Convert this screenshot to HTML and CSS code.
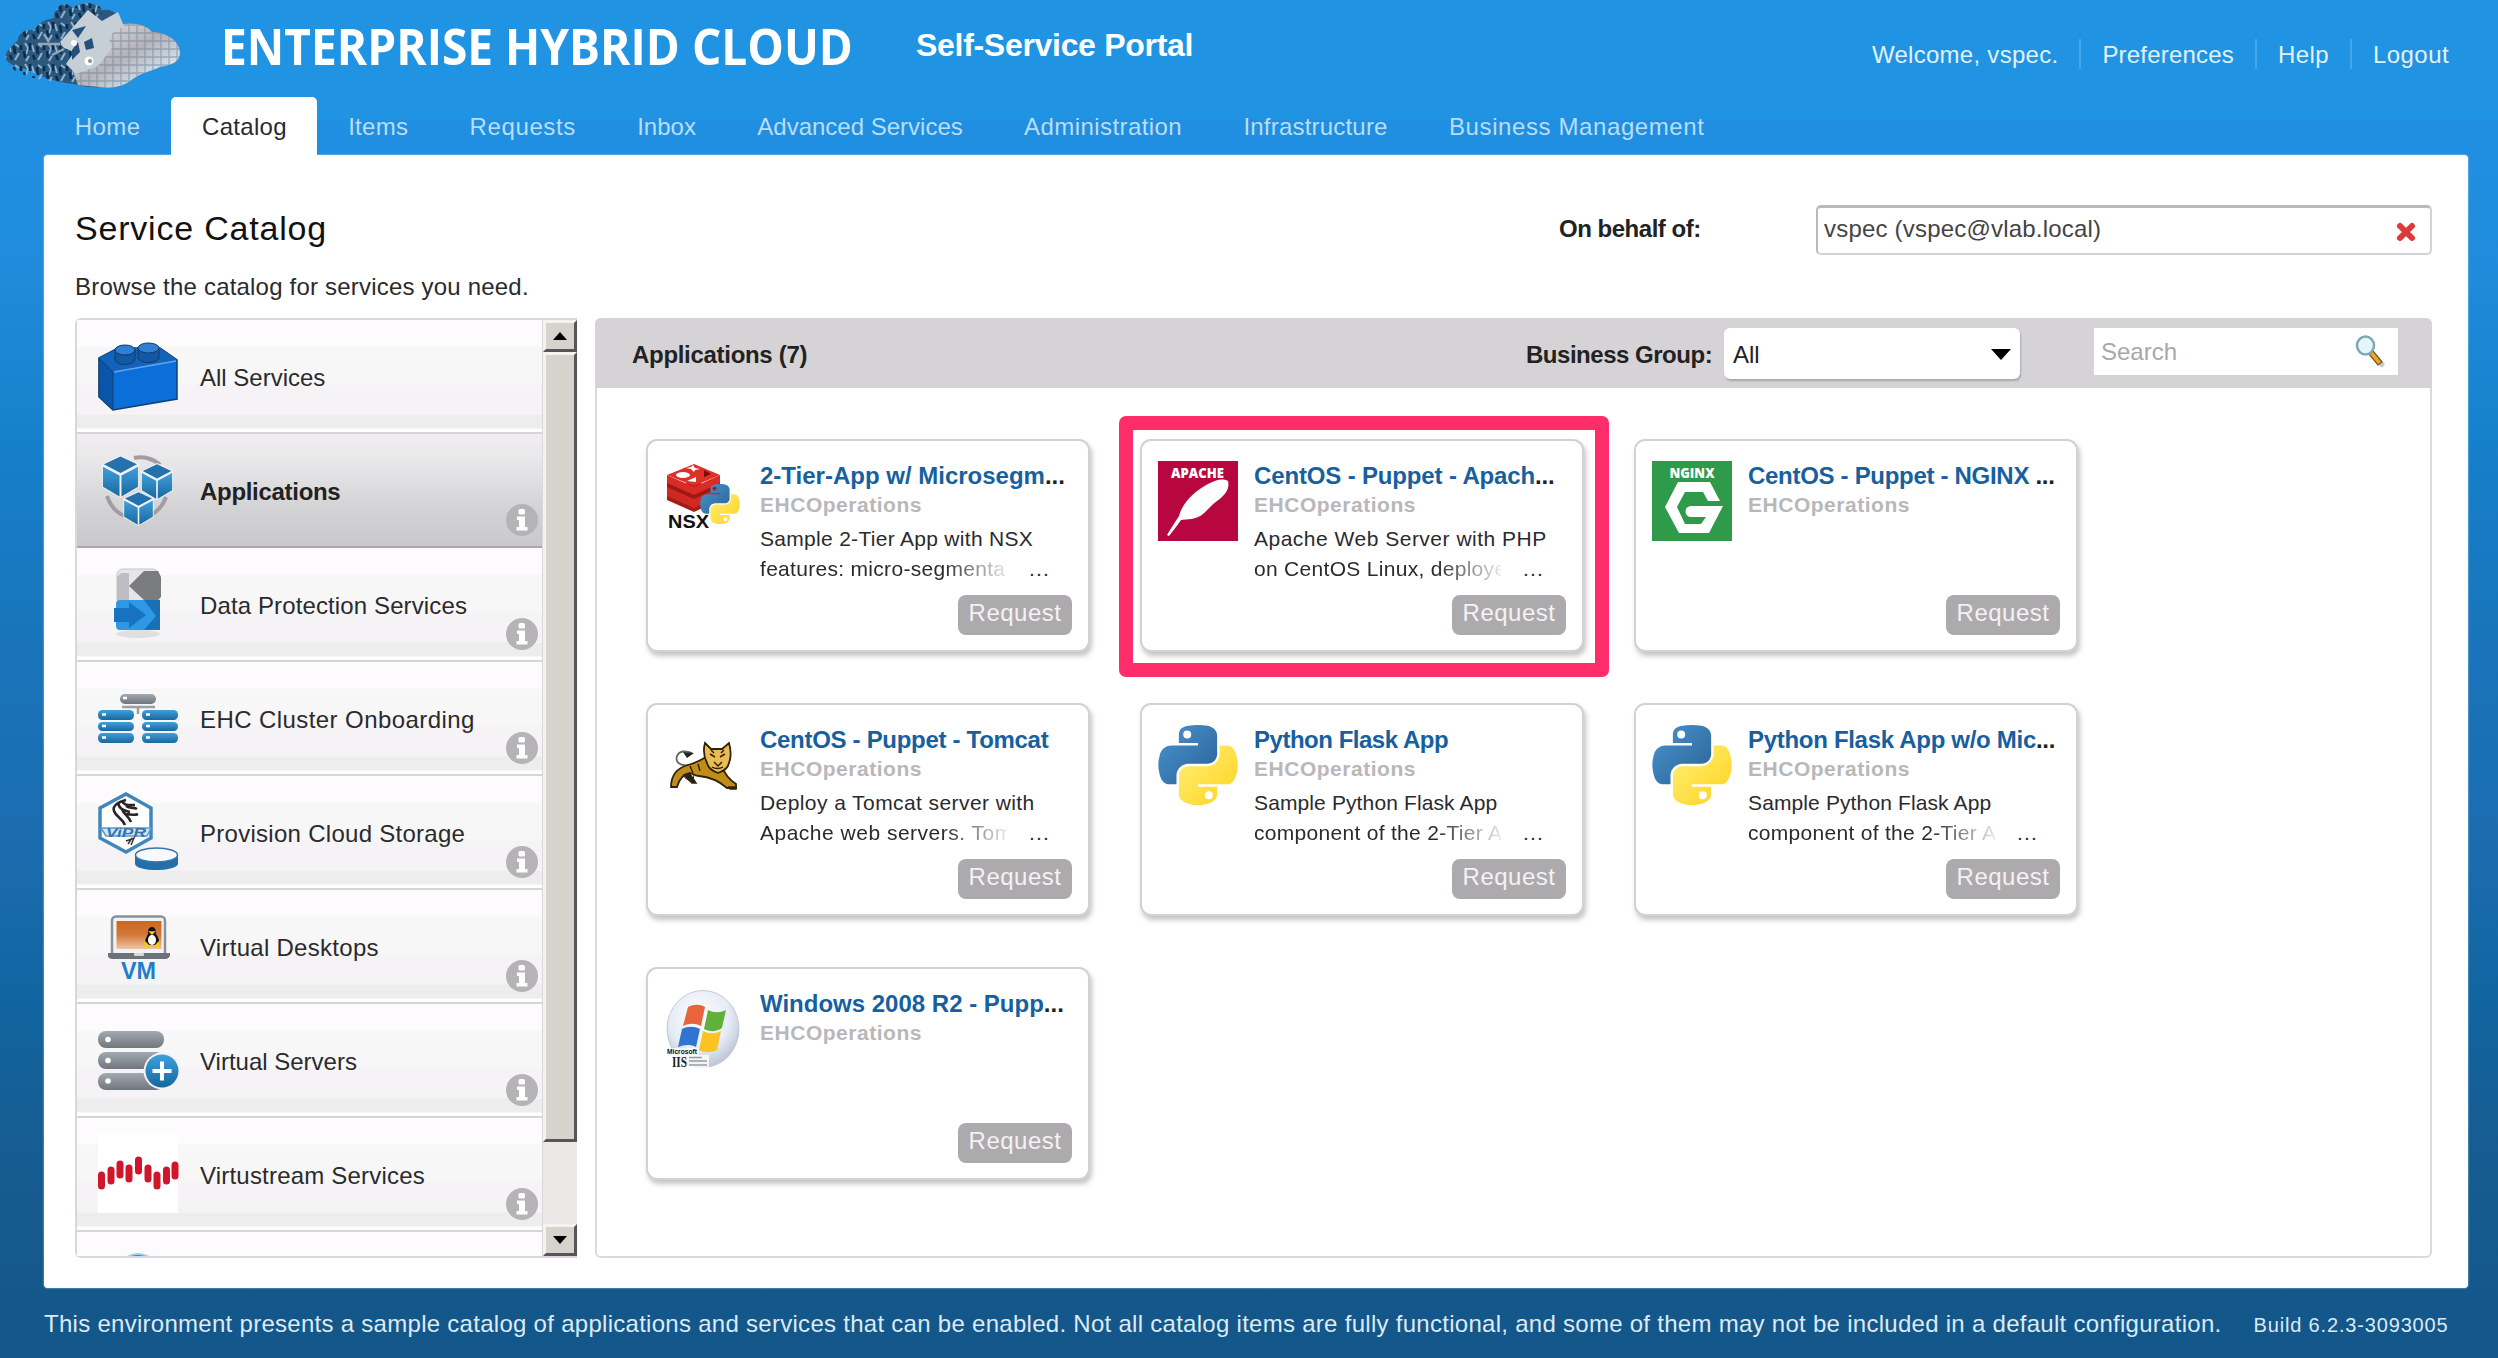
FILE: index.html
```html
<!DOCTYPE html>
<html lang="en">
<head>
<meta charset="utf-8">
<title>Service Catalog</title>
<link rel="stylesheet" href="styles.css">
</head>
<body>
<svg class="defs" width="0" height="0" aria-hidden="true">
  <defs>
    <linearGradient id="pyBlue" x1="0" y1="0" x2="1" y2="1"><stop offset="0" stop-color="#4a94cf"/><stop offset="1" stop-color="#2a6296"/></linearGradient>
    <linearGradient id="pyYellow" x1="0" y1="0" x2="1" y2="1"><stop offset="0" stop-color="#fff07a"/><stop offset="1" stop-color="#ffd21c"/></linearGradient>
    <linearGradient id="blueV" x1="0" y1="0" x2="0" y2="1"><stop offset="0" stop-color="#3f9fdc"/><stop offset="1" stop-color="#17689f"/></linearGradient>
    <linearGradient id="grayV" x1="0" y1="0" x2="0" y2="1"><stop offset="0" stop-color="#a3a9b0"/><stop offset="1" stop-color="#70767d"/></linearGradient>
    <symbol id="python" viewBox="0 0 111 112">
      <path fill="url(#pyBlue)" d="M54.9 0C50.3 0 46 .4 42.1 1.1 30.8 3.1 28.7 7.3 28.7 15v10.300h26.800v3.400H18.600c-7.800 0-14.600 4.700-16.700 13.600-2.500 10.200-2.600 16.500 0 27.200 1.900 8 6.400 13.600 14.200 13.600h9.300V70.800c0-8.800 7.600-16.600 16.700-16.600h26.800c7.400 0 13.400-6.200 13.400-13.700V15c0-7.200-6.100-12.700-13.400-13.900C64.300.3 59.500 0 54.900 0zM40.400 7.700a5.600 5.600 0 1 1 0 11.200 5.600 5.600 0 0 1 0-11.200z"/>
      <path fill="url(#pyYellow)" d="M85.600 28.700v11.900c0 9.200-7.800 17-16.700 17H42.100c-7.300 0-13.400 6.200-13.400 13.600v25.500c0 7.300 6.300 11.600 13.400 13.600 8.500 2.500 16.600 3 26.800 0 6.700-1.900 13.400-5.900 13.400-13.600V86.500H55.500v-3.400h40.200c7.800 0 10.700-5.400 13.400-13.600 2.800-8.400 2.700-16.500 0-27.200-1.900-7.800-5.600-13.600-13.400-13.600zM70.600 92.800a5.600 5.600 0 1 1 0 11.200 5.600 5.600 0 0 1 0-11.200z"/>
    </symbol>
    <symbol id="info" viewBox="0 0 32 32">
      <circle cx="16" cy="16" r="16" fill="#b5b3b6"/>
      <rect x="12.500" y="5" width="6.500" height="5.500" rx="1.500" fill="#fff"/>
      <path fill="#fff" d="M11 12.500h8V23h2.500v3.500h-11V23H13v-7h-2z"/>
    </symbol>
    <symbol id="cube" viewBox="0 0 40 44">
      <path d="M20 0L39 9V33L20 44 1 33V9z" fill="#f0f2f5"/>
      <path d="M20 1.500L37 9.500 20 18.500 3 9.500z" fill="#2472ad"/>
      <path d="M2 12L19 21V42.500L2 32.500z" fill="url(#blueV)"/>
      <path d="M38 12L21 21V42.500L38 32.500z" fill="url(#blueV)"/>
    </symbol>
  </defs>
</svg>

<header class="header">
  <div class="brand">
    <svg class="brand-logo" viewBox="0 0 190 97">
      <defs>
        <pattern id="grid" width="8" height="8" patternUnits="userSpaceOnUse"><path d="M0 1H8M1 0V8" stroke="#6f8296" stroke-width="1.300" opacity=".55"/></pattern>
        <pattern id="speck" width="23" height="21" patternUnits="userSpaceOnUse"><path d="M2 1l3 5-2 6M9 3l2 7M19 11l-4 7M6 14l-3 5M15 2l4 3" stroke="#8fb4d2" stroke-width="1.900" fill="none"/><path d="M7 1v7M14 4l1 8M1 9l1 7M10 13l2 5M21 3v5" stroke="#0c2c4a" stroke-width="2.600"/></pattern>
        <linearGradient id="cloudR" x1="0" y1="0" x2="1" y2="1"><stop offset="0" stop-color="#e2e6ec"/><stop offset=".5" stop-color="#b5b3b8"/><stop offset=".8" stop-color="#d3e4f2"/></linearGradient>
      </defs>
      <path d="M5 58C6 50 13 45 18 40c0-8 10-11 17-10 3-8 12-11 19-12C54 5 66 0 73 8c9-7 24-6 30 2 10-2 17 6 20 14 11-2 25 1 29 8 13 0 28 8 28 21 0 9-8 12-20 14-8 4-19 6-27 12-10 8-22 10-33 8-12 1-19-2-27-3-14-2-30-5-39-13-9-3-22-2-29-13z" fill="#2c587d"/>
      <path d="M5 58C6 50 13 45 18 40c0-8 10-11 17-10 3-8 12-11 19-12C54 5 66 0 73 8c9-7 24-6 30 2L75 83C51 82 10 78 5 58z" fill="url(#speck)"/>
      <path d="M106 24h17c11-2 25 1 29 8 13 0 28 8 28 21 0 9-8 12-20 14-8 4-19 6-27 12-10 8-22 10-33 8l-22-2-6-16 20-14z" fill="url(#cloudR)"/>
      <path d="M106 24h17c11-2 25 1 29 8 13 0 28 8 28 21 0 9-8 12-20 14-8 4-19 6-27 12-10 8-22 10-33 8l-22-2-6-16 20-14z" fill="url(#grid)"/>
      <path d="M60 42l28-32 14 11 16-9 6 14-16 10 4 12-14 18-22 8-10-10 8-12-10-4z" fill="#c6ced6"/>
      <path d="M72 30l14-4-8 12zM84 42l8-4 2 10-8 2zM72 50l6-8 2 10-8 8z" fill="#24507a"/>
      <circle cx="74" cy="43" r="3" fill="#fff"/><circle cx="89" cy="61" r="4.500" fill="#fff"/><circle cx="90" cy="61" r="2" fill="#8a8f95"/>
      <path d="M38 44h22M44 34l5 8M52 55l12-6" stroke="#9ba5ae" stroke-width="2.500"/>
    </svg>
    <h1 class="brand-name"><span>ENTERPRISE HYBRID CLOUD</span></h1>
    <span class="brand-sub ls-n3">Self-Service Portal</span>
    <div class="user-links">
      <span class="ls-3">Welcome, vspec.</span><i></i><a class="ls-2">Preferences</a><i></i><a class="ls-4">Help</a><i></i><a class="ls-4">Logout</a>
    </div>
  </div>
  <nav class="nav">
    <a class="ls-5">Home</a>
    <a class="active ls-3">Catalog</a>
    <a class="ls-3">Items</a>
    <a class="ls-6">Requests</a>
    <a>Inbox</a>
    <a>Advanced Services</a>
    <a class="ls-4">Administration</a>
    <a class="ls-2">Infrastructure</a>
    <a class="ls-6">Business Management</a>
  </nav>
</header>

<main class="page">
  <div class="page-head">
    <div>
      <h2 class="page-title">Service Catalog</h2>
      <p class="page-desc ls-2">Browse the catalog for services you need.</p>
    </div>
    <div class="behalf">
      <b class="ls-n5">On behalf of:</b>
      <div class="behalf-field"><span class="ls-2">vspec (vspec@vlab.local)</span>
        <svg class="clear" viewBox="0 0 20 18"><path d="M4 3L16 15M16 3L4 15" stroke="#dd3b3b" stroke-width="6" stroke-linecap="round"/></svg>
      </div>
    </div>
  </div>

  <div class="columns">
    <aside class="sidebar">
      <ul class="cats">
        <li>
          <svg class="cat-icon" viewBox="0 -2 80 80">
            <path d="M1 21L20 11H62L79 23V62L15 73 1 60z" fill="#0a6fd8" stroke="#14406e" stroke-width="1.500"/>
            <path d="M1 21L20 11H62L79 23 15 35z" fill="#1264ba"/>
            <path d="M1 21L15 35V73L1 60z" fill="#0a55a8" stroke="#14406e"/>
            <path d="M16 35L78 24" stroke="#5fa8ee" stroke-width="1.500"/>
            <path d="M17 13v10c2 6 18 6 20 0V13z" fill="#1258a4" stroke="#123a66"/><ellipse cx="27" cy="13" rx="10" ry="5" fill="#2f80d4" stroke="#123a66"/>
            <path d="M40 11v10c2 6 19 6 21 0V11z" fill="#1258a4" stroke="#123a66"/><ellipse cx="50.500" cy="11" rx="10.500" ry="5" fill="#2f80d4" stroke="#123a66"/>
          </svg>
          <span>All Services</span>
        </li>
        <li class="selected">
          <svg class="cat-icon" viewBox="0 0 80 80">
            <path d="M36 9c10-2 20 1 26 7M9 47c4 12 12 19 20 20M68 48c-3 9-8 14-15 18" fill="none" stroke="#a19da1" stroke-width="4"/>
            <use href="#cube" x="3" y="6" width="39" height="43"/><use href="#cube" x="42" y="14" width="34" height="37"/><use href="#cube" x="24" y="42" width="33" height="35"/>
          </svg>
          <span class="ls-n3">Applications</span><svg class="info"><use href="#info"/></svg>
        </li>
        <li>
          <svg class="cat-icon" viewBox="0 -2 80 80">
            <ellipse cx="40" cy="69" rx="22" ry="4" fill="#dfdfe2"/>
            <rect x="19" y="4" width="42" height="36" rx="6" fill="#e6e6e8" stroke="#c5c5c8"/>
            <path d="M19 12v24h12V8H23z" fill="#bebec2"/>
            <path d="M31 21L46 6h14l3 6v20l-4 4H47z" fill="#7b7c80"/>
            <rect x="18" y="35" width="44" height="30" rx="4" fill="#2e98e4"/>
            <path d="M46 35h16v30H46l12-14z" fill="#1b70b5"/>
            <path d="M16 43h15v-6L48 50 31 63v-6H16z" fill="#1673c0"/>
          </svg>
          <span class="ls-1">Data Protection Services</span><svg class="info"><use href="#info"/></svg>
        </li>
        <li>
          <svg class="cat-icon" viewBox="0 -3 80 80">
            <path d="M24 27H57M40 27v7" stroke="#9ba0a6" stroke-width="2.500"/>
            <rect x="22" y="14" width="36" height="10" rx="5" fill="url(#grayV)"/>
            <g fill="url(#blueV)"><rect y="30" width="36" height="10" rx="4.500"/><rect y="42" width="36" height="9" rx="4.500"/><rect y="53" width="36" height="10" rx="4.500"/><rect x="44" y="30" width="36" height="10" rx="4.500"/><rect x="44" y="42" width="36" height="9" rx="4.500"/><rect x="44" y="53" width="36" height="10" rx="4.500"/></g>
            <path d="M25 18h4M4 34.500h4M4 46h4M4 57.500h4M48 34.500h4M48 46h4M48 57.500h4" stroke="#fff" stroke-width="2.500"/>
          </svg>
          <span class="ls-4">EHC Cluster Onboarding</span><svg class="info"><use href="#info"/></svg>
        </li>
        <li>
          <svg class="cat-icon" viewBox="0 0 80 80">
            <path d="M28 3L53 17V47L28 61 2 47V17z" fill="#fff" stroke="#3f86bd" stroke-width="3.500"/>
            <path d="M28 9c-8 2-14 6-12 11 2 6 8 7 11 14M20 11c1 8 6 8 12 10M24 10c2 5 8 4 13 4M28 15c4 3 8 1 11 3M24 18c2 6 6 6 9 13M27 23c6 0 9 2 13 0" fill="none" stroke="#2a2626" stroke-width="2.600"/>
            <path d="M3 37h50l-4 8H8z" fill="#cfe4f4" stroke="#5a9bcb" stroke-width="1.500"/>
            <text x="8" y="46" font-size="12" font-style="italic" font-weight="700" textLength="40" lengthAdjust="spacingAndGlyphs" fill="#3474ab" class="glyph">ViPR</text>
            <path d="M34 47l-4 6M28 50l8-3-3 7" stroke="#333" stroke-width="1.500" fill="none"/>
            <path d="M37 64v9c2 8 40 8 43 0v-9z" fill="#246ea9"/>
            <ellipse cx="58.500" cy="64" rx="21" ry="7" fill="#f6fafd" stroke="#3576a8" stroke-width="1.500"/>
          </svg>
          <span class="ls-3">Provision Cloud Storage</span><svg class="info"><use href="#info"/></svg>
        </li>
        <li>
          <svg class="cat-icon" viewBox="0 0 80 80">
            <defs><linearGradient id="screen" x1="0" y1="0" x2="0" y2="1"><stop offset="0" stop-color="#cd671f"/><stop offset=".5" stop-color="#d3783a"/><stop offset="1" stop-color="#edc5a5"/></linearGradient></defs>
            <rect x="14" y="11.500" width="53" height="40" rx="4" fill="#f1f2f4" stroke="#8b9198" stroke-width="2.500"/>
            <rect x="18.500" y="16" width="45" height="28" fill="url(#screen)"/>
            <path d="M10 48H72v3c-2 3-4 3-6 3H16c-3 0-5 0-6-3z" fill="#6d7279"/><rect x="36" y="48" width="10" height="3" rx="1" fill="#d5d8db"/>
            <path d="M54 22c4 0 4 5 4 7 3 4 4 8 3 11H47c-1-3 1-7 3-11 0-3 0-7 4-7z" fill="#111"/><ellipse cx="54" cy="35" rx="4" ry="5" fill="#fff"/><path d="M47 37l4 4h-4zM61 37l-4 4h4zM52 27h4l-2 2z" fill="#f5cb16" stroke="#f5cb16" stroke-width="1.500"/>
            <text x="23" y="73.500" font-size="24" font-weight="700" textLength="35" lengthAdjust="spacingAndGlyphs" fill="#1e7ec8" class="glyph">VM</text>
          </svg>
          <span class="ls-3">Virtual Desktops</span><svg class="info"><use href="#info"/></svg>
        </li>
        <li>
          <svg class="cat-icon" viewBox="0 0 80 80">
            <g fill="url(#grayV)"><rect y="12" width="66" height="17" rx="8"/><rect y="33" width="66" height="17" rx="8"/><rect y="54" width="66" height="17" rx="8"/></g>
            <g fill="#fff"><circle cx="10" cy="20.500" r="2.800"/><circle cx="10" cy="41.500" r="2.800"/><circle cx="10" cy="62" r="2.800"/></g>
            <circle cx="64" cy="52" r="18.500" fill="#f4f2f5"/><circle cx="64" cy="52" r="16.500" fill="url(#blueV)"/>
            <path d="M64 42.500v19M54.500 52h19" stroke="#fff" stroke-width="4"/>
          </svg>
          <span>Virtual Servers</span><svg class="info"><use href="#info"/></svg>
        </li>
        <li>
          <svg class="cat-icon" viewBox="0 0 80 80">
            <rect width="80" height="80" fill="#fff"/>
            <path d="M3.500 42V53M13 37V48M22 31V42M31 35V46M40.500 27V38M50 35V46M59 42V53M68.500 37V48M77 32V43" stroke="#d2162a" stroke-width="7" stroke-linecap="round"/>
          </svg>
          <span class="ls-2">Virtustream Services</span><svg class="info"><use href="#info"/></svg>
        </li>
        <li class="peek">
          <svg class="cat-icon" viewBox="0 0 80 80"><circle cx="40" cy="28" r="21" fill="#2d87c8" stroke="#9fd2f2" stroke-width="2"/></svg>
        </li>
      </ul>
      <div class="scrollbar">
        <div class="sb-btn"><svg viewBox="0 0 14 8"><path d="M0 8L7 0l7 8z"/></svg></div>
        <div class="sb-thumb"></div>
        <div class="sb-track"></div>
        <div class="sb-btn"><svg viewBox="0 0 14 8"><path d="M0 0L7 8l7-8z"/></svg></div>
      </div>
    </aside>

    <section class="catalog">
      <div class="toolbar">
        <b class="toolbar-title ls-n3">Applications (7)</b>
        <b class="bg-label ls-n5">Business Group:</b>
        <div class="select"><span>All</span><svg viewBox="0 0 20 11"><path d="M0 0H20L10 11z"/></svg></div>
        <div class="search"><span>Search</span>
          <svg viewBox="0 0 34 34">
            <path d="M20 17l10 11-3 4-10-11z" fill="#c9c7c9" transform="translate(2 2)"/>
            <path d="M20 17l9 11-4 3-9-11z" fill="#e8a72c" stroke="#7c541a" stroke-width="1.200"/>
            <ellipse cx="12.500" cy="11.500" rx="8.500" ry="9" fill="#e6f5f8" stroke="#7fa9b3" stroke-width="2.500"/>
          </svg>
        </div>
      </div>
      <div class="grid">
        <article class="card">
          <svg class="card-icon" viewBox="-2 0 80 80">
            <g transform="translate(1 1)"><path d="M0 30L27 18 53 30V38L27 50 0 38z" fill="#a51d17"/><path d="M0 24L27 36 53 24V34L27 46 0 34z" fill="#cf2a22"/><path d="M0 18L27 30 53 18V25L27 37 0 25z" fill="#9c1a15"/><path d="M0 13L27 25 53 13V21L27 33 0 21z" fill="#d92c24"/><path d="M27 2L53 13 27 24 0 13z" fill="#dd3128"/></g>
            <ellipse cx="17" cy="14" rx="7" ry="3" fill="#fff"/><path d="M20 7l5-1 2-2 2 3 5 1-5 1-1 2-3-3zM21 20l9-4v5z" fill="#fff"/><path d="M38 9l7 4-7 3z" fill="#7a0d0a"/>
            <use href="#python" x="34" y="23" width="40" height="40"/>
            <text x="2" y="66.500" font-size="19" font-weight="700" textLength="41" lengthAdjust="spacingAndGlyphs" class="glyph" fill="#111">NSX</text>
          </svg>
          <div class="card-body"><h3>2-Tier-App w/ Microsegm<em>...</em></h3><p class="org">EHCOperations</p>
          <p class="desc"><span>Sample 2-Tier App with NSX</span><span class="fade"><span>features: micro-segmenta</span></span></p></div>
          <button>Request</button>
        </article>
        <article class="card highlighted">
          <svg class="card-icon" viewBox="0 0 80 80"><rect width="80" height="80" fill="#b80640"/>
            <text x="13" y="17" font-size="14.500" font-weight="800" textLength="53" lengthAdjust="spacingAndGlyphs" class="sans" fill="#fff">APACHE</text>
            <path d="M70 20c2 8-3 14-11 20-7 5-9 9-14 13-7 6-16 5-22 6C19 65 14 71 11 75l-2-1C13 67 18 60 21 55 24 42 38 29 50 23 58 19 64 17 70 20z" fill="#fff"/></svg>
          <div class="card-body"><h3 class="ls-n2">CentOS - Puppet - Apach<em>...</em></h3><p class="org">EHCOperations</p>
          <p class="desc"><span class="ls-5">Apache Web Server with PHP</span><span class="fade"><span class="ls-0">on CentOS Linux, deployed</span></span></p></div>
          <button>Request</button>
        </article>
        <article class="card">
          <svg class="card-icon" viewBox="0 0 80 80"><rect width="80" height="80" fill="#2e9a4a"/>
            <text x="17.500" y="16.500" font-size="14" font-weight="800" textLength="45" lengthAdjust="spacingAndGlyphs" class="sans" fill="#fff">NGINX</text>
            <path d="M26 21H58L68 40H56L51 31H33L25 46 33 63H49L54 56H39a5 5 0 0 1 0-11H71L57 72H27L13 46z" fill="#fff"/></svg>
          <div class="card-body"><h3 class="ls-n3">CentOS - Puppet - NGINX <em>...</em></h3><p class="org">EHCOperations</p></div>
          <button>Request</button>
        </article>
        <article class="card">
          <svg class="card-icon" viewBox="0 0 80 80">
            <path d="M27 40C16 42 11 37 13 31c2-5 8-6 15-3" fill="none" stroke="#666" stroke-width="1.800"/><path d="M19 27l11 1-7 5z" fill="#222"/>
            <path d="M20 46l10 2-1 10-8-5z" fill="#fff" stroke="#333"/>
            <path d="M7 62C7 51 13 43 24 40c8-2 13-5 18-8l17 11c2 7 7 12 13 16v4h-9C55 56 46 52 35 51c-3 0-6-2-9-3-7 1-11 7-13 14z" fill="#c08d18" stroke="#30220a" stroke-width="1.800"/>
            <path d="M41 18l6 6h11l7-6c2 7 2 15 0 20-1 5-5 8-11 10-6-2-10-6-11-10-3-6-4-13-2-20z" fill="#e8bd55" stroke="#30220a" stroke-width="1.800"/>
            <path d="M46 29l5 3M61 29l-5 3M50 37l4 4 4-4M48 42c3 2 8 2 11 0M47 25l3 3M60 25l-3 3" stroke="#30220a" stroke-width="1.500" fill="none"/>
            <path d="M26 41l3 7M34 39l2 7M20 50l8 8h4l-6-9zM65 62h7v2h-6z" stroke="#30220a" stroke-width="1.500" fill="#222"/>
          </svg>
          <div class="card-body"><h3 class="ls-n3">CentOS - Puppet - Tomcat</h3><p class="org">EHCOperations</p>
          <p class="desc"><span class="ls-4">Deploy a Tomcat server with</span><span class="fade"><span class="ls-5">Apache web servers. Tom</span></span></p></div>
          <button>Request</button>
        </article>
        <article class="card">
          <svg class="card-icon"><use href="#python" width="80" height="80"/></svg>
          <div class="card-body"><h3 class="ls-n5">Python Flask App</h3><p class="org">EHCOperations</p>
          <p class="desc"><span class="ls-1">Sample Python Flask App</span><span class="fade"><span>component of the 2-Tier App</span></span></p></div>
          <button>Request</button>
        </article>
        <article class="card">
          <svg class="card-icon"><use href="#python" width="80" height="80"/></svg>
          <div class="card-body"><h3 class="ls-n3">Python Flask App w/o Mic<em>...</em></h3><p class="org">EHCOperations</p>
          <p class="desc"><span class="ls-1">Sample Python Flask App</span><span class="fade"><span>component of the 2-Tier App</span></span></p></div>
          <button>Request</button>
        </article>
        <article class="card">
          <svg class="card-icon" viewBox="0 0 80 80">
            <defs><radialGradient id="orb" cx=".45" cy=".35" r=".7"><stop offset="0" stop-color="#fff"/><stop offset=".6" stop-color="#e6ebf5"/><stop offset="1" stop-color="#b3bdd0"/></radialGradient></defs>
            <ellipse cx="39" cy="40" rx="36" ry="38.500" fill="url(#orb)" stroke="#c3cad8"/>
            <path d="M24 18c6-3 12-3 17 0l-4 19c-6-3-12-3-18 0z" fill="#e8643a"/>
            <path d="M44 21c6 3 12 3 18 0l-4 18c-6 4-12 4-18 1z" fill="#5fb13c"/>
            <path d="M18 40c6-3 12-3 18 0l-4 18c-6-3-12-2-18 0z" fill="#2f74cf"/>
            <path d="M39 42c6 3 12 3 18 0l-4 19c-6 3-12 3-18 0z" fill="#fbc31f"/>
            <path d="M2 59h33v7h10v13H8L2 68z" fill="#fff" opacity=".75"/>
            <text x="3" y="65" font-size="7.500" font-weight="700" textLength="30" lengthAdjust="spacingAndGlyphs" class="glyph" fill="#111">Microsoft</text>
            <text x="8" y="78" font-size="15" font-weight="700" textLength="15" lengthAdjust="spacingAndGlyphs" class="serif" fill="#222">IIS</text>
            <path d="M25 68.500h13M25 72h18M25 76h18" stroke="#9b9ba0" stroke-width="1.500"/>
          </svg>
          <div class="card-body"><h3>Windows 2008 R2 - Pupp<em>...</em></h3><p class="org">EHCOperations</p></div>
          <button>Request</button>
        </article>
      </div>
    </section>
  </div>
</main>

<footer class="footer">
  <span class="note">This environment presents a sample catalog of applications and services that can be enabled. Not all catalog items are fully functional, and some of them may not be included in a default configuration.</span>
  <span class="build">Build 6.2.3-3093005</span>
</footer>
</body>
</html>
```
FILE: styles.css
```css
*, *::before, *::after { box-sizing: border-box; }
body {
  margin: 0;
  width: 2498px;
  height: 1358px;
  overflow: hidden;
  font: 24px/28px "Liberation Sans", Arial, sans-serif;
  color: #2b2a2d;
  background: linear-gradient(180deg, #2094e3 0, #2094e3 118px, #208fe2 120px, #208edf 190px, #1f8bd9 280px, #1580cb 440px, #1974ba 640px, #1b6cae 850px, #1065a0 1000px, #165d94 1120px, #155a8c 1240px, #13568a 1358px);
}
h1, h2, h3, p, ul { margin: 0; padding: 0; font-weight: 400; }
svg { display: block; overflow: visible; }
.defs { position: absolute; }
.glyph { font-family: "Liberation Sans", Arial, sans-serif; }
.sans { font-family: "Open Sans", sans-serif; }
.serif { font-family: "Liberation Serif", serif; }

/* letter tracking, in tenths of a pixel */
.ls-n5 { letter-spacing: -.48px; }
.ls-n3 { letter-spacing: -.3px; }
.ls-n2 { letter-spacing: -.15px; }
.ls-1 { letter-spacing: .12px; }
.ls-2 { letter-spacing: .2px; }
.ls-3 { letter-spacing: .28px; }
.ls-4 { letter-spacing: .42px; }
.ls-5 { letter-spacing: .5px; }
.ls-6 { letter-spacing: .6px; }

/* header */
.header { height: 155px; }
.brand { height: 97px; display: flex; white-space: nowrap; }
.brand-logo { width: 190px; height: 97px; flex: none; }
.brand-name {
  width: 694px;
  padding-left: 31px;
  font: 700 50px/92px "Open Sans", sans-serif;
  color: #fff;
}
.brand-name span { display: inline-block; transform: scaleX(.922); transform-origin: 0 50%; }
.brand-sub { margin-left: 32px; font-weight: 700; font-size: 32px; line-height: 91px; color: #fff; }
.user-links { margin-left: auto; padding: 39px 49px 0 0; height: 69px; display: flex; line-height: 31px; color: #e0f1fc; }
.user-links i { width: 2px; height: 30px; margin: 0 21px; background: #45a6e8; }
.nav { height: 58px; padding-left: 44px; display: flex; line-height: 59px; color: #b8def8; white-space: nowrap; }
.nav a { padding: 0 30.7px; }
.nav .active { background: #fff; color: #2b2a2d; border-radius: 5px 5px 0 0; }

/* page */
.page { margin: 0 30px 0 44px; height: 1133px; padding: 0 36px 0 31px; background: #fff; border-radius: 4px; box-shadow: 0 0 2px #bfe0f5; }
.page-head { height: 163px; display: flex; justify-content: space-between; white-space: nowrap; }
.page-title { margin-top: 54px; font-size: 34px; line-height: 38px; letter-spacing: .8px; color: #111; }
.page-desc { margin-top: 26px; line-height: 28px; }
.behalf { display: flex; padding-top: 50px; }
.behalf b { width: 257px; line-height: 47px; color: #222; }
.behalf-field {
  width: 616px; height: 50px; padding: 0 14px 0 6px;
  display: flex; justify-content: space-between;
  line-height: 41px; color: #444;
  border: 2px solid #d3d1d4; border-top: 3px solid #bbb9bc; border-left-color: #bbb9bc; border-radius: 5px;
}
.clear { width: 20px; height: 18px; margin-top: 15px; }

.columns { display: flex; gap: 18px; height: 940px; }
.sidebar { width: 502px; display: flex; border: 2px solid #d9d7da; border-right: 0; border-radius: 6px 0 0 6px; }
.cats { flex: 1; height: 936px; overflow: hidden; list-style: none; border-right: 1px solid #d9d7da; }
.cats li {
  height: 114px; padding: 15px 4px 0 21px; display: flex; gap: 22px; white-space: nowrap;
  background: linear-gradient(#fefbfe 0 26px, #f7f7f8 27px 62px, #f6f3f6 66px 94px, #eeedee 95px 108px, #fff 109px);
  border-bottom: 2px solid #d6d4d7;
}
.cats li span { flex: 1; line-height: 85px; }
.cats .selected {
  background: linear-gradient(#f1ecf1 0, #e9e8e9 25px, #dedde0 50px, #d3d2d5 75px, #c9c8cb);
  border-bottom-color: #a9a7aa; font-weight: 700; color: #222;
}
.cat-icon { width: 80px; height: 80px; flex: none; }
.info { width: 32px; height: 32px; margin-top: 55px; flex: none; }
.scrollbar { width: 34px; display: flex; flex-direction: column; background: #d6d3cd; }
.sb-btn { height: 32px; display: flex; align-items: center; justify-content: center; }
.sb-btn, .sb-thumb { background: #d6d3cd; border: 3px solid; border-color: #f5f3f0 #57555a #57555a #f5f3f0; }
.sb-btn svg { width: 14px; height: 8px; }
.sb-thumb { height: 790px; }
.sb-track { flex: 1; background: #ebe9e7; }

.catalog { width: 1837px; border: 2px solid #dbd9dc; border-radius: 6px; }
.toolbar { height: 70px; margin: -2px -2px 0; padding: 10px 34px 0 37px; display: flex; background: #d5d3d6; border-radius: 6px 6px 0 0; line-height: 53px; white-space: nowrap; color: #222; }
.toolbar-title { flex: 1; }
.bg-label { width: 198px; }
.select { width: 296px; height: 51px; margin-right: 74px; padding: 0 9px; display: flex; justify-content: space-between; background: #fff; border-radius: 6px; box-shadow: 1px 2px 2px #aaa8ab; }
.select svg { width: 20px; height: 11px; margin-top: 21px; }
.search { width: 304px; height: 47px; padding: 0 11px 0 7px; display: flex; justify-content: space-between; background: #fff; color: #a9a7aa; line-height: 48px; }
.search svg { width: 34px; height: 34px; margin-top: 6px; }

.grid { display: grid; grid-template-columns: repeat(3, 444px); grid-auto-rows: 213px; gap: 51px 50px; padding: 51px 0 0 49px; }
.card { position: relative; border: 2px solid #d3d1d4; border-radius: 11px; background: #fff; box-shadow: 2px 4px 5px rgba(90, 85, 92, .35); display: flex; padding: 20px 0 0 16px; }
.card-icon { width: 80px; height: 80px; flex: none; }
.card-body { margin-left: 16px; padding-top: 1px; white-space: nowrap; }
.card h3 { font-size: 24px; font-weight: 700; line-height: 28px; color: #17609f; }
.card em { font-style: normal; color: #222; }
.org { font-size: 21px; font-weight: 700; line-height: 30px; letter-spacing: .52px; color: #b9b7ba; }
.desc { margin-top: 4px; font-size: 21px; line-height: 30px; letter-spacing: .3px; }
.desc > span { display: block; }
.fade { position: relative; width: 290px; }
.fade > span { display: inline-block; width: 247px; overflow: hidden; vertical-align: top; -webkit-mask-image: linear-gradient(90deg, #000 74%, rgba(0, 0, 0, .1)); mask-image: linear-gradient(90deg, #000 74%, rgba(0, 0, 0, .1)); }
.fade::after { content: "..."; position: absolute; left: 269px; top: 0; letter-spacing: 1.2px; }
.card button { position: absolute; right: 16px; bottom: 15px; width: 114px; height: 40px; padding: 0 0 4px; border: 0; border-radius: 8px; background: #adaaad; color: #f3f2f3; font: 24px/32px "Liberation Sans", Arial, sans-serif; letter-spacing: .5px; }
.highlighted::after { content: ""; position: absolute; left: -23px; top: -25px; width: 490px; height: 261px; border: 14px solid #ff2e6b; border-radius: 7px; }

.footer { display: flex; gap: 32px; padding: 22px 49px 0 44px; white-space: nowrap; color: #dceaf4; line-height: 28px; }
.note { letter-spacing: .28px; }
.build { font-size: 20px; line-height: 30px; letter-spacing: .84px; }
```
